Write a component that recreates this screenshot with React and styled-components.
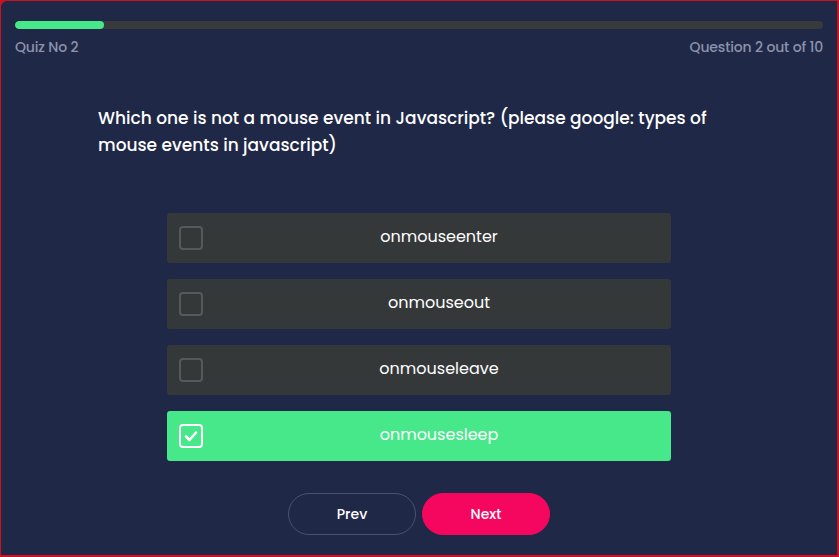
import React, { useState } from "react";
import styled, { createGlobalStyle } from "styled-components";

const Global = createGlobalStyle`
  html, body { margin: 0; padding: 0; background: #cf1020; }
  * { box-sizing: border-box; }
  body { font-family: "Poppins", "Open Sans", "Noto Sans", sans-serif; }
`;

const Frame = styled.div`
  width: 839px;
  height: 557px;
  padding: 1px 2px 2px 1px;
  background: #cc1122;
`;

const Screen = styled.div`
  width: 100%;
  height: 100%;
  background: #1f2847;
  border-radius: 6px 0 0 0;
  padding: 20px 14px 0 14px;
  display: flex;
  flex-direction: column;
`;

const Track = styled.div`
  height: 8px;
  border-radius: 4px;
  background: #383b3c;
  overflow: hidden;
`;

const Fill = styled.div`
  height: 100%;
  border-radius: 4px;
  background: #46e88a;
`;

const Meta = styled.div`
  display: flex;
  justify-content: space-between;
  margin-top: 8px;
  font-size: 14px;
  font-weight: 500;
  color: #8c93aa;
  letter-spacing: -0.15px;
`;

const Question = styled.h2`
  margin: 47px 0 0 83px;
  width: 640px;
  font-size: 17px;
  line-height: 27px;
  font-weight: 500;
  color: #ffffff;
`;

const Options = styled.div`
  margin: 54px auto 0;
  width: 504px;
  display: flex;
  flex-direction: column;
  gap: 16px;
`;

const Option = styled.button`
  height: 50px;
  border: none;
  border-radius: 3px;
  padding: 0 0 0 12px;
  background: ${(p) => (p.$checked ? "#46e88a" : "#353839")};
  color: #ffffff;
  font-family: inherit;
  font-size: 16px;
  display: flex;
  align-items: center;
  cursor: pointer;
`;

const Label = styled.span`
  flex: 1;
  text-align: center;
  padding: 0 0 4px 4px;
`;

const Box = styled.span`
  flex: none;
  width: 24px;
  height: 24px;
  border-radius: 4px;
  border: 2px solid ${(p) => (p.$checked ? "#ffffff" : "#56595a")};
  display: flex;
  align-items: center;
  justify-content: center;
`;

const Nav = styled.div`
  margin-top: 32px;
  display: flex;
  justify-content: center;
  gap: 6px;
`;

const NavButton = styled.button`
  width: 128px;
  height: 42px;
  border-radius: 21px;
  border: 1px solid ${(p) => (p.$primary ? "#f5075f" : "#4a5170")};
  background: ${(p) => (p.$primary ? "#f5075f" : "transparent")};
  color: #ffffff;
  font-family: inherit;
  font-size: 14px;
  font-weight: 500;
  cursor: pointer;
`;

const options = ["onmouseenter", "onmouseout", "onmouseleave", "onmousesleep"];

export default function App() {
  const [sel, setSel] = useState(3);
  return (
    <Frame>
      <Global />
      <Screen>
        <Track>
          <Fill style={{ width: `${(2 / 10) * 55}%` }} />
        </Track>
        <Meta>
          <span>Quiz No 2</span>
          <span>Question 2 out of 10</span>
        </Meta>
        <Question>
          Which one is not a mouse event in Javascript? (please google: types of mouse events in javascript)
        </Question>
        <Options>
          {options.map((o, i) => (
            <Option key={o} $checked={sel === i} onClick={() => setSel(i)}>
              <Box $checked={sel === i}>
                {sel === i && (
                  <svg width="16" height="16" viewBox="0 0 16 16">
                    <path d="M3 8.5 L6.5 12 L13 4.5" fill="none" stroke="#fff" strokeWidth="2.6" strokeLinecap="round" strokeLinejoin="round" />
                  </svg>
                )}
              </Box>
              <Label>{o}</Label>
            </Option>
          ))}
        </Options>
        <Nav>
          <NavButton>Prev</NavButton>
          <NavButton $primary>Next</NavButton>
        </Nav>
      </Screen>
    </Frame>
  );
}
